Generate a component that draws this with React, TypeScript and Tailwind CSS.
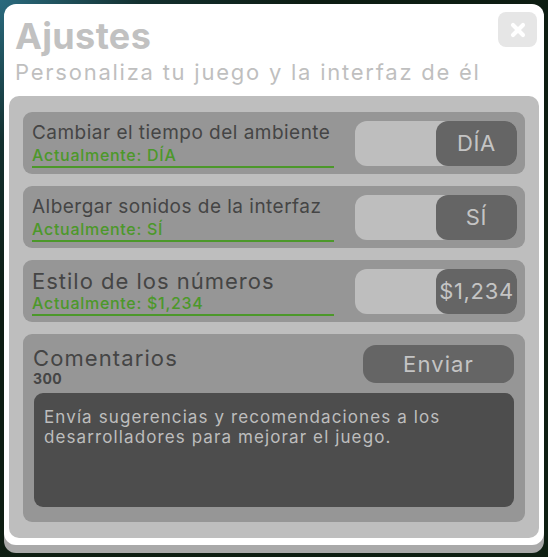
import { X } from "lucide-react";

const font = { fontFamily: "Inter, 'Noto Sans', sans-serif" };

const settings = [
    { label: "Cambiar el tiempo del ambiente", current: "DÍA", value: "DÍA", labelSize: "text-[19px] tracking-[0.025em]" },
    { label: "Albergar sonidos de la interfaz", current: "SÍ", value: "SÍ", labelSize: "text-[19px] tracking-[0.025em]" },
    { label: "Estilo de los números", current: "$1,234", value: "$1,234", labelSize: "text-[22px] tracking-[0.045em]" },
];

function SettingRow({ label, current, value, labelSize }: (typeof settings)[number]) {
    return (
        <div className="flex h-[62px] items-center justify-between rounded-[9px] bg-[#969696] pl-[9px] pr-[8px]">
            <div className="mt-[3px] flex w-[302px] flex-col">
                <span className={`${labelSize} leading-[24px] text-[#454545]`}>{label}</span>
                <span className="border-b-2 border-[#4c982a] pb-[1px] text-[16px] font-medium leading-[20px] tracking-[0.045em] text-[#4c982a]">
                    Actualmente: {current}
                </span>
            </div>
            <div className="flex h-[45px] w-[162px] justify-end rounded-[12px] bg-[#bebebe]">
                <div className="flex h-full w-[81px] items-center justify-center rounded-[12px] bg-[#656565] text-[22px] tracking-[0.03em] text-[#c4c4c4]">
                    {value}
                </div>
            </div>
        </div>
    );
}

export default function App() {
    return (
        <div
            className="h-[557px] w-[548px] overflow-hidden bg-[radial-gradient(circle_at_0%_0%,#2a6a7e_0%,#13302f_18%,#0d1c12_40%,#0e1f12_100%)] pl-[4px] pt-[4px]"
            style={font}
        >
            <div className="flex h-[541px] w-[540px] flex-col rounded-[12px] bg-white px-[5px] pb-[7px] shadow-[0_8px_0_#a9a9a9]">
                {/* Header */}
                <div className="relative h-[92px] pl-[6px] pt-[12px]">
                    <h1 className="text-[36px] font-bold leading-[40px] tracking-[0.01em] text-[#c1c1c1]">Ajustes</h1>
                    <p className="mt-[3px] text-[22px] leading-[26px] tracking-[0.08em] text-[#bfbfbf]">
                        Personaliza tu juego y la interfaz de él
                    </p>
                    <button className="absolute right-[2px] top-[8px] flex h-[35px] w-[39px] items-center justify-center rounded-[8px] bg-[#e6e6e6]">
                        <X size={20} strokeWidth={5} color="#ffffff" />
                    </button>
                </div>

                {/* Body */}
                <div className="flex flex-1 flex-col gap-[12px] rounded-[10px] bg-[#bebebe] px-[14px] pb-[16px] pt-[16px]">
                    {settings.map((s) => (
                        <SettingRow key={s.label} {...s} />
                    ))}

                    <div className="flex flex-1 flex-col rounded-[9px] bg-[#969696] px-[11px] pb-[15px] pt-[11px]">
                        <div className="flex items-start justify-between">
                            <div className="flex flex-col">
                                <span className="-ml-[1px] text-[22px] leading-[26px] tracking-[0.05em] text-[#454545]">Comentarios</span>
                                <span className="-ml-[1px] text-[14px] font-bold leading-[16px] tracking-[0.03em] text-[#454545]">300</span>
                            </div>
                            <button className="flex h-[38px] w-[151px] items-center justify-center rounded-[13px] bg-[#656565] text-[22px] tracking-[0.05em] text-[#c4c4c4]">
                                Enviar
                            </button>
                        </div>
                        <div className="mt-[6px] flex-1 rounded-[9px] bg-[#4d4d4d] px-[10px] pt-[14px] text-[17px] leading-[20px] tracking-[0.065em] text-[#bdbdbd]">
                            Envía sugerencias y recomendaciones a los desarrolladores para mejorar el juego.
                        </div>
                    </div>
                </div>
            </div>
        </div>
    );
}
